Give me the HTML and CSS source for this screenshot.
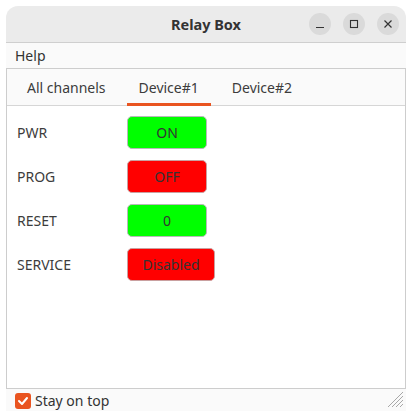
FILE: index.html
```html
<!DOCTYPE html>
<html>
<head>
<meta charset="utf-8">
<link rel="stylesheet" href="styles.css">
</head>
<body>
<div class="window">
  <div class="titlebar">
    <div class="title">Relay Box</div>
    <div class="wbtns">
      <span class="wbtn"><svg width="10" height="10" viewBox="0 0 10 10"><path d="M1 8.5h8" stroke="#333" stroke-width="1.2"/></svg></span>
      <span class="wbtn"><svg width="10" height="10" viewBox="0 0 10 10"><rect x="1.5" y="1.5" width="7" height="7" fill="none" stroke="#333" stroke-width="1.1"/></svg></span>
      <span class="wbtn"><svg width="10" height="10" viewBox="0 0 10 10"><path d="M1.5 1.5l7 7M8.5 1.5l-7 7" stroke="#333" stroke-width="1.2"/></svg></span>
    </div>
  </div>
  <div class="menubar"><span class="menu">Help</span></div>
  <div class="notebook">
    <div class="tabs">
      <div class="tab">All channels</div>
      <div class="tab active">Device#1</div>
      <div class="tab">Device#2</div>
    </div>
    <div class="page">
      <div class="row"><span class="label">PWR</span><span class="btn on">ON</span></div>
      <div class="row"><span class="label">PROG</span><span class="btn off">OFF</span></div>
      <div class="row"><span class="label">RESET</span><span class="btn on">0</span></div>
      <div class="row"><span class="label">SERVICE</span><span class="btn off wide">Disabled</span></div>
    </div>
  </div>
  <div class="statusbar">
    <span class="check"><svg width="12" height="10" viewBox="0 0 12 10"><path d="M2 5l3 3 5-6" fill="none" stroke="#fff" stroke-width="2" stroke-linecap="round" stroke-linejoin="round"/></svg></span>
    <span class="checklabel">Stay on top</span>
    <span class="grip"><svg width="20" height="18" viewBox="0 0 20 18"><path d="M19 2L4 17M19 6L8 17M19 10L12 17M19 14L16 17" stroke="#a8a8a8" stroke-width="1"/></svg></span>
  </div>
</div>
</body>
</html>
```
FILE: styles.css
```css
html, body {
  margin: 0;
  padding: 0;
  background: #ffffff;
}
body {
  font-family: "Noto Sans", "DejaVu Sans", sans-serif;
  font-size: 14px;
  color: #3c3c3c;
}
.window {
  margin: 6px;
  width: 400px;
  height: 405px;
  display: flex;
  flex-direction: column;
  border-radius: 12px 12px 0 0;
  overflow: hidden;
  background: #fafafa;
}
.titlebar {
  height: 36px;
  flex: none;
  background: #ebebeb;
  border-bottom: 1px solid #cfcfcf;
  position: relative;
  display: flex;
  align-items: center;
  justify-content: center;
}
.title {
  font-weight: bold;
  font-size: 14.5px;
  color: #333;
}
.wbtns {
  position: absolute;
  right: 7px;
  top: 7px;
  display: flex;
  gap: 12px;
}
.wbtn {
  width: 22px;
  height: 22px;
  border-radius: 50%;
  background: #dadada;
  display: flex;
  align-items: center;
  justify-content: center;
}
.menubar {
  height: 25px;
  flex: none;
  background: #fafafa;
  display: flex;
  align-items: center;
  padding-left: 9px;
}
.menu {
  color: #333;
}
.notebook {
  flex: 1;
  background: #fff;
  border: 1px solid #cdcdcd;
  display: flex;
  flex-direction: column;
}
.tabs {
  height: 37px;
  flex: none;
  display: flex;
  border-bottom: 1px solid #d6d6d6;
  box-sizing: border-box;
  background: #fafafa;
  padding-left: 8px;
  gap: 9px;
}
.tab {
  padding: 0 12px;
  display: flex;
  align-items: center;
  box-sizing: border-box;
  border-bottom: 3px solid transparent;
  margin-bottom: -1px;
  padding-top: 3px;
  color: #3c3c3c;
}
.tab.active {
  border-bottom-color: #e95420;
}
.page {
  padding: 10px 10px;
  display: flex;
  flex-direction: column;
  gap: 11px;
}
.row {
  display: flex;
  align-items: center;
  height: 33px;
}
.label {
  width: 110px;
  color: #3c3c3c;
}
.btn {
  width: 80px;
  height: 33px;
  box-sizing: border-box;
  border-radius: 5px;
  border: 1px solid #b9b9b9;
  display: flex;
  align-items: center;
  justify-content: center;
  color: #333;
}
.btn.on {
  background: #00ff00;
}
.btn.off {
  background: #ff0000;
  border-color: #c9a0a0;
}
.btn.wide {
  width: 88px;
}
.statusbar {
  height: 22px;
  flex: none;
  display: flex;
  align-items: center;
  padding-left: 9px;
  position: relative;
}
.check {
  width: 16px;
  height: 16px;
  border-radius: 3px;
  background: #e95420;
  display: flex;
  align-items: center;
  justify-content: center;
  margin-right: 4px;
  margin-top: 1px;
}
.checklabel {
  color: #333;
}
.grip {
  position: absolute;
  right: 2px;
  bottom: 3px;
  width: 20px;
  height: 18px;
}
```
